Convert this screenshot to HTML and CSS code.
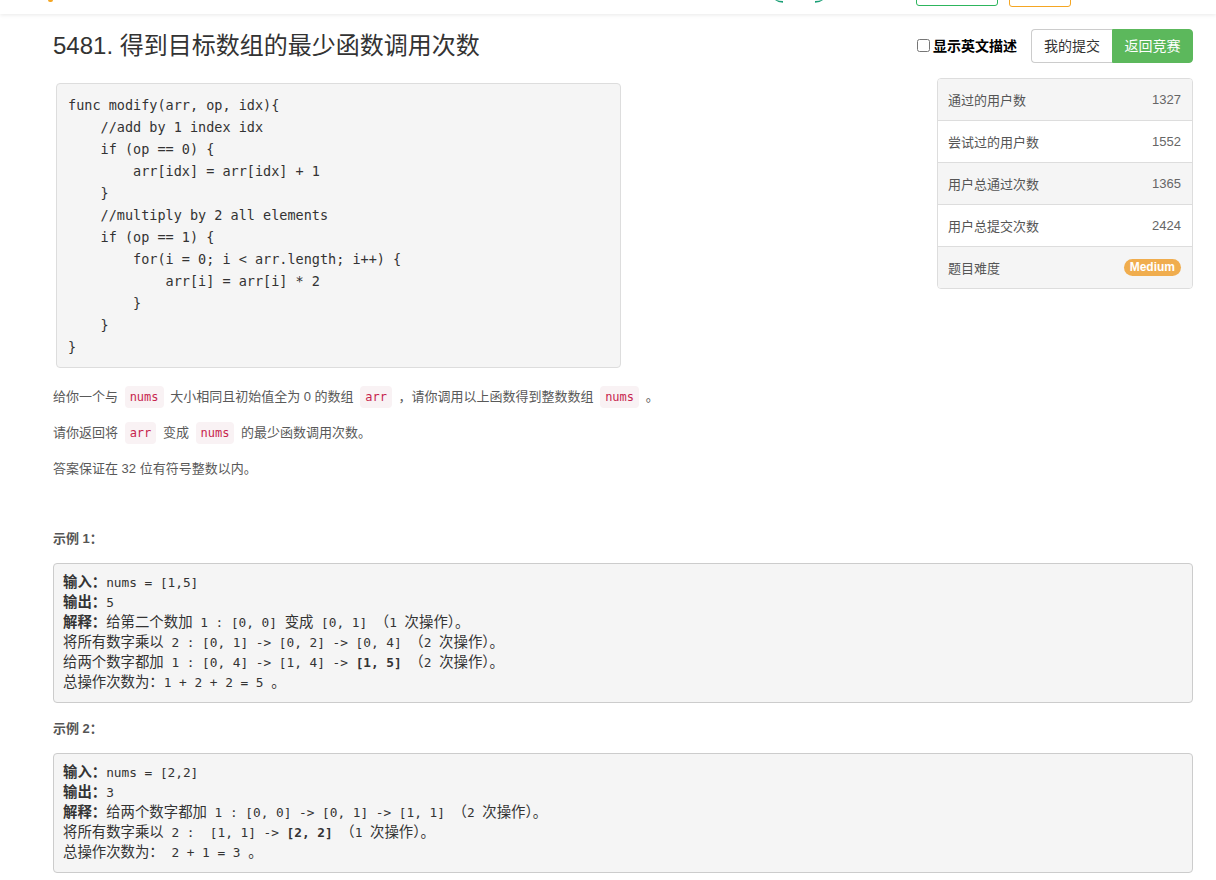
FILE: index.html
```html
<!DOCTYPE html>
<html lang="zh-CN">
<head>
<meta charset="utf-8">
<title>5481. 得到目标数组的最少函数调用次数</title>
<link rel="stylesheet" href="styles.css">
</head>
<body>
<header class="nav">
  <span class="nav-logo"></span>
  <svg class="nav-icon" width="48" height="4" viewBox="0 0 48 4"><path d="M0 0 Q3 2.6 8 2.8 L8 1 Q4 1 1.5 0 Z" fill="#1a9f76"/><path d="M48 0 Q45 2.6 40 2.8 L40 1 Q44 1 46.5 0 Z" fill="#1a9f76"/></svg>
  <span class="nav-btn nav-btn-green"></span>
  <span class="nav-btn nav-btn-orange"></span>
</header>

<main class="page">
  <div class="title-row">
    <h3 class="title">5481. 得到目标数组的最少函数调用次数</h3>
    <div class="actions">
      <label class="en-toggle"><input type="checkbox" class="en-check">显示英文描述</label>
      <div class="btn-group">
        <span class="btn btn-default">我的提交</span>
        <span class="btn btn-success">返回竞赛</span>
      </div>
    </div>
  </div>

  <div class="content-row">
    <div class="desc-top">
<pre class="code-block">func modify(arr, op, idx){
    //add by 1 index idx
    if (op == 0) {
        arr[idx] = arr[idx] + 1
    }
    //multiply by 2 all elements
    if (op == 1) {
        for(i = 0; i &lt; arr.length; i++) {
            arr[i] = arr[i] * 2
        }
    }
}</pre>
    </div>
    <aside class="stats">
      <div class="stat-row"><span>通过的用户数</span><span class="num">1327</span></div>
      <div class="stat-row"><span>尝试过的用户数</span><span class="num">1552</span></div>
      <div class="stat-row"><span>用户总通过次数</span><span class="num">1365</span></div>
      <div class="stat-row"><span>用户总提交次数</span><span class="num">2424</span></div>
      <div class="stat-row"><span>题目难度</span><span class="badge">Medium</span></div>
    </aside>
  </div>

  <div class="desc">
    <p>给你一个与 <code>nums</code> 大小相同且初始值全为 0 的数组 <code>arr</code> ，请你调用以上函数得到整数数组 <code>nums</code> 。</p>
    <p>请你返回将 <code>arr</code> 变成 <code>nums</code> 的最少函数调用次数。</p>
    <p>答案保证在 32 位有符号整数以内。</p>
    <p class="blank">&nbsp;</p>
    <p class="ex-title"><strong>示例 1：</strong></p>
<pre class="example"><strong class="zh">输入：</strong>nums = [1,5]
<strong class="zh">输出：</strong>5
<strong class="zh">解释：</strong><span class="zh">给第二个数加</span> 1 : [0, 0] <span class="zh">变成</span> [0, 1] <span class="zh">（</span>1 <span class="zh">次操作）。</span>
<span class="zh">将所有数字乘以</span> 2 : [0, 1] -&gt; [0, 2] -&gt; [0, 4] <span class="zh">（</span>2 <span class="zh">次操作）。</span>
<span class="zh">给两个数字都加</span> 1 : [0, 4] -&gt; [1, 4] -&gt; <strong>[1, 5]</strong> <span class="zh">（</span>2 <span class="zh">次操作）。</span>
<span class="zh">总操作次数为：</span>1 + 2 + 2 = 5 <span class="zh">。</span></pre>
    <p class="ex-title"><strong>示例 2：</strong></p>
<pre class="example"><strong class="zh">输入：</strong>nums = [2,2]
<strong class="zh">输出：</strong>3
<strong class="zh">解释：</strong><span class="zh">给两个数字都加</span> 1 : [0, 0] -&gt; [0, 1] -&gt; [1, 1] <span class="zh">（</span>2 <span class="zh">次操作）。</span>
<span class="zh">将所有数字乘以</span> 2 :  [1, 1] -&gt; <strong>[2, 2]</strong> <span class="zh">（</span>1 <span class="zh">次操作）。</span>
<span class="zh">总操作次数为：</span> 2 + 1 = 3 <span class="zh">。</span></pre>
  </div>
</main>
</body>
</html>
```

FILE: styles.css
```css
html, body {
  margin: 0;
  padding: 0;
  background: #fff;
}

body {
  font-family: "Liberation Sans", "Noto Sans CJK SC", sans-serif;
  font-size: 13px;
  color: #333;
}

/* top navigation (scrolled mostly out of view) */
.nav {
  height: 14px;
  overflow: hidden;
  display: flex;
  align-items: flex-start;
  background: #fff;
  box-shadow: 0 1px 4px rgba(0, 0, 0, 0.09);
  position: relative;
  z-index: 1;
}

.nav-logo {
  width: 5px;
  height: 2px;
  margin-left: 48px;
  background: #f5a623;
  border-radius: 0 0 2px 2px;
}

.nav-icon {
  margin-left: 722px;
  display: block;
}

.nav-btn {
  display: block;
  height: 30px;
  margin-top: -24px;
  box-sizing: border-box;
  border-radius: 3px;
}

.nav-btn-green {
  width: 82px;
  margin-left: 93px;
  border: 1px solid #2db55d;
}

.nav-btn-orange {
  width: 62px;
  height: 31px;
  margin-left: 11px;
  border: 1px solid #f5a623;
}

/* page */
.page {
  padding: 0 23px 40px 53px;
}

.title-row {
  display: flex;
  justify-content: space-between;
  align-items: center;
  margin-top: 15px;
  height: 34px;
}

.title {
  margin: 0;
  font-size: 24px;
  font-weight: normal;
  line-height: 34px;
  color: #333;
}

.actions {
  display: flex;
  align-items: center;
}

.en-toggle {
  display: flex;
  align-items: center;
  font-size: 14px;
  font-weight: bold;
  color: #000;
  margin-right: 14px;
  margin-top: -2px;
}

.en-check {
  width: 13px;
  height: 13px;
  margin: 0 3px 0 0;
}

.btn-group {
  display: flex;
}

.btn {
  display: block;
  box-sizing: border-box;
  height: 34px;
  width: 81px;
  padding: 0;
  line-height: 32px;
  font-size: 14px;
  border: 1px solid #ccc;
  text-align: center;
  white-space: nowrap;
}

.btn-default {
  background: #fff;
  color: #333;
  border-radius: 4px 0 0 4px;
  border-right: 0;
}

.btn-success {
  background: #5cb85c;
  border-color: #5cb85c;
  color: #fff;
  border-radius: 0 4px 4px 0;
}

/* code block + sidebar row */
.content-row {
  display: flex;
  justify-content: space-between;
  align-items: flex-start;
  margin-top: 15px;
}

.desc-top {
  padding-top: 5px;
}

.code-block {
  box-sizing: border-box;
  width: 565px;
  margin: 0 0 0 3px;
  padding: 10px 11px 9px;
  background: #f5f5f5;
  border: 1px solid #ddd;
  border-radius: 4px;
  font-family: "DejaVu Sans Mono", monospace;
  font-size: 13.5px;
  line-height: 22px;
  color: #333;
  white-space: pre;
}

.stats {
  width: 256px;
  box-sizing: border-box;
  border: 1px solid #ddd;
  border-radius: 4px;
  overflow: hidden;
}

.stat-row {
  display: flex;
  justify-content: space-between;
  align-items: center;
  height: 41px;
  padding: 0 11px 0 10px;
  border-top: 1px solid #ddd;
  color: #555;
  font-size: 13px;
}

.stat-row:first-child {
  border-top: 0;
}

.stat-row:nth-child(odd) {
  background: #f5f5f5;
}

.stat-row .num {
  color: #666;
}

.badge {
  display: inline-block;
  background: #f0ad4e;
  color: #fff;
  font-weight: bold;
  font-size: 12px;
  line-height: 17px;
  padding: 0 6px;
  border-radius: 9px;
}

/* description */
.desc {
  margin-top: 18px;
}

.desc p {
  margin: 0 0 14px;
  line-height: 22px;
  color: #595959;
  font-size: 13px;
}

.desc p.blank {
  margin-bottom: 12px;
}

.desc code {
  font-family: "DejaVu Sans Mono", monospace;
  font-size: 12px;
  color: #c7254e;
  background: #f9f2f4;
  padding: 4px 5px;
  border-radius: 4px;
  margin: 0 3px;
}

.desc p.ex-title {
  margin: 0 0 13px;
}

.desc p.ex-title strong {
  color: #555;
}

.example {
  box-sizing: border-box;
  margin: 0 0 15px;
  padding: 9px;
  background: #f5f5f5;
  border: 1px solid #ccc;
  border-radius: 4px;
  font-family: "DejaVu Sans Mono", "Noto Sans CJK SC", monospace;
  font-size: 12.8px;
  letter-spacing: -0.03px;
  line-height: 20px;
  color: #333;
  white-space: pre;
}

.example .zh {
  font-family: "Noto Sans CJK SC", sans-serif;
  font-size: 14.4px;
  letter-spacing: 0;
  line-height: 1;
}

.example strong {
  color: #333;
}
```
